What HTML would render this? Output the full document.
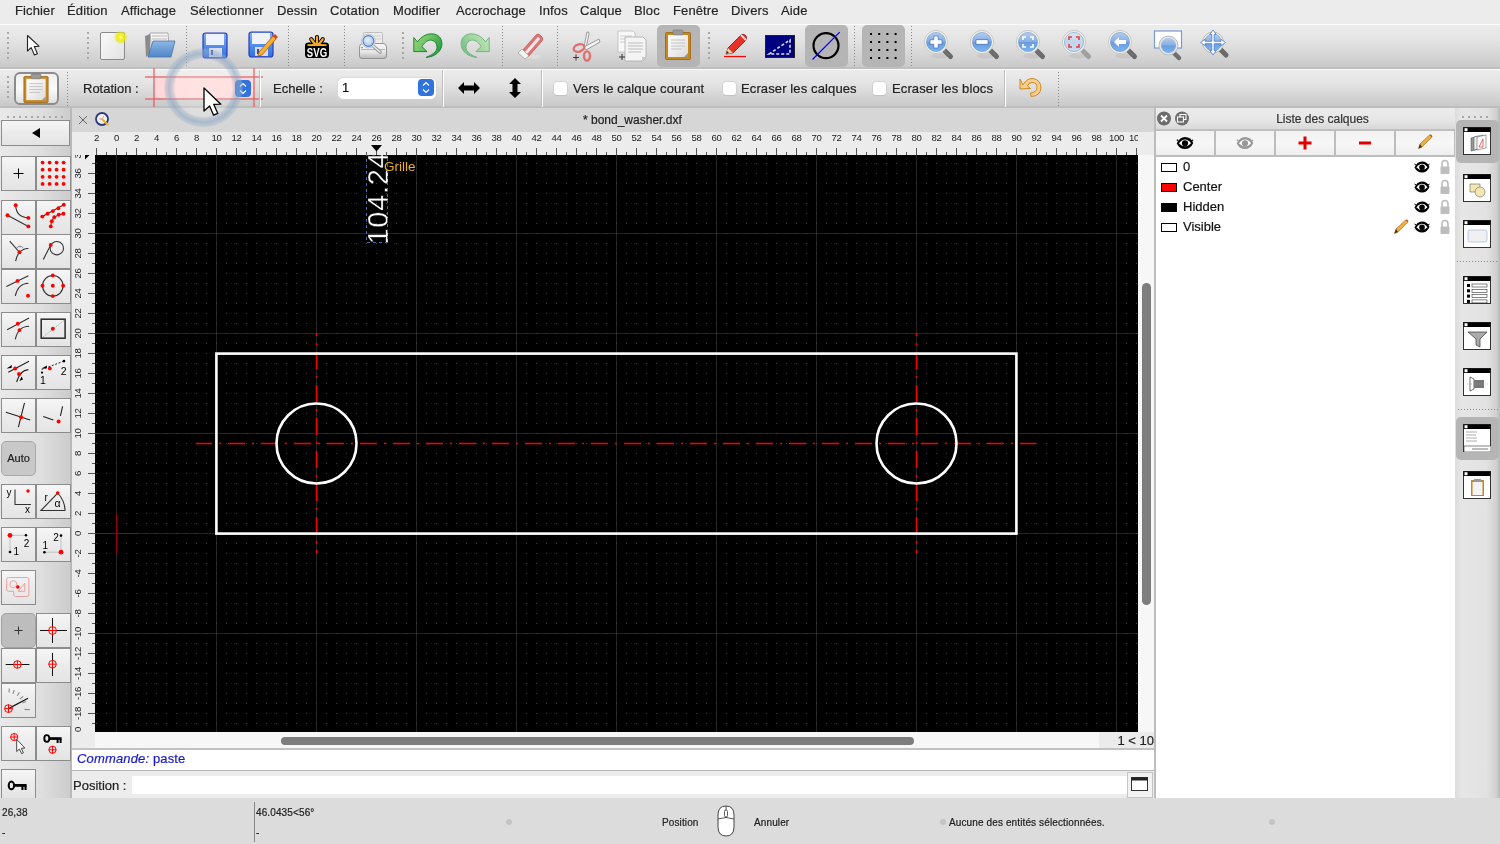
<!DOCTYPE html>
<html><head><meta charset="utf-8"><style>*{margin:0;padding:0;box-sizing:border-box}
html,body{width:1500px;height:844px;overflow:hidden;background:#ececec;font-family:"Liberation Sans",sans-serif;color:#222;position:relative}
body{will-change:transform;-webkit-font-smoothing:antialiased;-webkit-text-stroke:0.2px currentColor}
.a{position:absolute}
svg.a{display:block}
#menu{left:0;top:0;width:1500px;height:24px;background:#ececec}
#menu span{position:absolute;top:3px;font-size:13px;color:#262626;white-space:nowrap;letter-spacing:0.12px}
#tb1{left:0;top:24px;width:1500px;height:45px;background:linear-gradient(#ececec,#e4e4e4 35%,#d6d6d6 70%,#cacaca);border-top:1px solid #fbfbfb;border-bottom:2px solid #bfbfbf}
#tb2{left:0;top:69px;width:1500px;height:39px;background:linear-gradient(#ececec,#e4e4e4 35%,#d6d6d6 70%,#c9c9c9);border-top:1px solid #fbfbfb;border-bottom:2px solid #bdbdbd}
.dsep{position:absolute;width:1px;background:repeating-linear-gradient(#8a8a8a 0 1px,transparent 1px 3px)}
.hsep{position:absolute;width:2px;background:repeating-linear-gradient(#a8a8a8 0 2px,transparent 2px 5px)}
.wsep{position:absolute;width:2px;border-left:1px solid #c0c0c0;background:#fff}
#left{left:0;top:108px;width:70px;height:690px;background:linear-gradient(90deg,#e9e9e9,#dedede 60%,#cccccc)}
#leftb{left:70px;top:108px;width:2px;height:690px;background:#b8b8b8}
.btn{position:absolute;width:35px;height:35px;border:1px solid #8c8c8c;background:linear-gradient(#f6f6f6,#ececec 45%,#e4e4e4)}
.btn svg{position:absolute;left:0;top:0}
.btnp{position:absolute;width:35px;height:35px;border:1px solid #a0a0a0;border-radius:5px;background:#bdbdbd}
#mdi{left:72px;top:108px;width:1083px;height:690px;background:#d6d6d6}
#title{left:72px;top:108px;width:1083px;height:24px;background:#d6d6d6;font-size:12px;color:#222;line-height:24px;padding-left:511px}
#zoomlbl{left:1099px;top:732px;width:55px;height:16px;background:#ebebeb;font-size:13px;text-align:right;color:#222;line-height:17px}
#status{left:0;top:798px;width:1500px;height:46px;background:#dcdcdc;font-size:10px;color:#222}
.st{position:absolute;font-size:10px;color:#222;white-space:nowrap;letter-spacing:0.12px}
</style></head><body><div id="menu" class="a">
<span style="left:15px">Fichier</span>
<span style="left:67px">Édition</span>
<span style="left:121px">Affichage</span>
<span style="left:190px">Sélectionner</span>
<span style="left:277px">Dessin</span>
<span style="left:330px">Cotation</span>
<span style="left:393px">Modifier</span>
<span style="left:456px">Accrochage</span>
<span style="left:539px">Infos</span>
<span style="left:580px">Calque</span>
<span style="left:634px">Bloc</span>
<span style="left:673px">Fenêtre</span>
<span style="left:731px">Divers</span>
<span style="left:781px">Aide</span>
</div>
<div id="tb1" class="a"></div><div id="tb2" class="a"></div>
<svg width="0" height="0" style="position:absolute"><defs>
<linearGradient id="lensg" x1="0" y1="0" x2="0" y2="1"><stop offset="0" stop-color="#b4ccee"/><stop offset="0.48" stop-color="#86aee4"/><stop offset="0.52" stop-color="#6a9cdc"/><stop offset="1" stop-color="#7cb4ee"/></linearGradient>
<linearGradient id="lensgr" x1="0" y1="0" x2="0" y2="1"><stop offset="0" stop-color="#dce6f2"/><stop offset="0.5" stop-color="#c4d4ea"/><stop offset="1" stop-color="#c8dcf2"/></linearGradient>
<linearGradient id="flop" x1="0" y1="0" x2="0" y2="1"><stop offset="0" stop-color="#7fb1f2"/><stop offset="1" stop-color="#2f6fe0"/></linearGradient>
<linearGradient id="folder" x1="0" y1="0" x2="0" y2="1"><stop offset="0" stop-color="#8fb7e6"/><stop offset="1" stop-color="#4f86c8"/></linearGradient>
<linearGradient id="green" x1="0" y1="0" x2="1" y2="0.6"><stop offset="0" stop-color="#9ad878"/><stop offset="0.5" stop-color="#6cc464"/><stop offset="1" stop-color="#28a040"/></linearGradient>
<linearGradient id="greenl" x1="0" y1="0" x2="1" y2="0.6"><stop offset="0" stop-color="#c4e8b8"/><stop offset="0.5" stop-color="#a4d8a0"/><stop offset="1" stop-color="#78c088"/></linearGradient>
</defs></svg><div class="hsep" style="left:7px;top:32px;height:27px"></div><div class="hsep" style="left:87px;top:32px;height:27px"></div><div class="hsep" style="left:402px;top:32px;height:27px"></div><div class="hsep" style="left:708px;top:32px;height:27px"></div><div class="dsep" style="left:186px;top:26px;height:40px"></div><div class="dsep" style="left:288px;top:26px;height:40px"></div><div class="dsep" style="left:344px;top:26px;height:40px"></div><div class="dsep" style="left:502px;top:26px;height:40px"></div><div class="dsep" style="left:557px;top:26px;height:40px"></div><div class="dsep" style="left:854px;top:26px;height:40px"></div><div class="dsep" style="left:911px;top:26px;height:40px"></div><svg class="a" style="left:25px;top:34px" width="16" height="24" viewBox="0 0 16 24"><path d="M2.5,1.5 L2.5,17 L6.2,13.6 L9.4,21 L12.4,19.7 L9.3,12.6 L14,12.2 Z" fill="#fff" stroke="#222" stroke-width="1.1" stroke-linejoin="round"/></svg><svg class="a" style="left:98px;top:30px" width="30" height="32" viewBox="0 0 30 32"><defs><linearGradient id="pg" x1="0" y1="0" x2="1" y2="1"><stop offset="0" stop-color="#fafafa"/><stop offset="1" stop-color="#e2e2e2"/></linearGradient><radialGradient id="glow"><stop offset="0" stop-color="#ffffe8"/><stop offset="0.3" stop-color="#f6f020"/><stop offset="0.65" stop-color="#f0ea00" stop-opacity="0.75"/><stop offset="1" stop-color="#f0ea00" stop-opacity="0"/></radialGradient></defs><rect x="2.5" y="2.5" width="24" height="27" rx="1.5" fill="url(#pg)" stroke="#8a8a8a" stroke-width="1"/><circle cx="22.7" cy="7.3" r="7" fill="url(#glow)"/></svg><svg class="a" style="left:142px;top:30px" width="34" height="30" viewBox="0 0 34 30"><path d="M3,6 L8,4 L8,24 L4,27 Z" fill="#8a8a8a"/><path d="M8,3 L26,3 L27,18 L10,24 Z" fill="#f4f4f4" stroke="#999" stroke-width="0.8"/><path d="M10,6 L25,6 M10,9 L25,9" stroke="#bbb"/><path d="M6,27 L11,11 L33,11 L29,27 Z" fill="url(#folder)" stroke="#4a74a8" stroke-width="0.8"/></svg><svg class="a" style="left:202px;top:32px" width="31" height="28" viewBox="0 0 31 28"><rect x="1" y="1" width="24" height="25" rx="2.5" fill="url(#flop)" stroke="#2a3ab8" stroke-width="1.2"/><rect x="4" y="2" width="18" height="11" fill="#eef2fb"/><rect x="7" y="16" width="13" height="9" fill="#d8dce8"/><rect x="9" y="18" width="2" height="5" fill="#2a4ab8"/></svg><svg class="a" style="left:248px;top:31px" width="31" height="28" viewBox="0 0 31 28"><rect x="1" y="1" width="24" height="25" rx="2.5" fill="url(#flop)" stroke="#2a3ab8" stroke-width="1.2"/><rect x="4" y="2" width="18" height="11" fill="#eef2fb"/><rect x="7" y="16" width="13" height="9" fill="#d8dce8"/><rect x="9" y="18" width="2" height="5" fill="#2a4ab8"/><path d="M11,21 L25,5 L28,8 L14,24 L10,25 Z" fill="#f8b030" stroke="#b05a00" stroke-width="0.8"/><path d="M25,5 L27,3 L30,6 L28,8 Z" fill="#e04030"/></svg><svg class="a" style="left:304px;top:33px" width="26" height="26" viewBox="0 0 26 26"><g stroke="#000" stroke-width="4.2" stroke-linecap="round"><path d="M13,4 L13,12 M7.2,6.2 L11,12 M18.8,6.2 L15,12 M3.5,12 L22.5,12"/></g><rect x="1" y="9.6" width="24" height="15.4" rx="3.6" fill="#000"/><g stroke="#f6a829" stroke-width="2.2" stroke-linecap="round"><path d="M13,4 L13,11 M7.2,6.2 L11,11 M18.8,6.2 L15,11"/></g><path d="M3.6,12.6 Q13,9 22.4,12.6 L22.4,13 L3.6,13 Z" fill="#f6a829"/><rect x="3.5" y="11.2" width="19" height="1.6" fill="#f6a829"/><text x="13" y="23.6" font-family="Liberation Sans" font-weight="bold" font-size="12" fill="#fff" text-anchor="middle" transform="translate(13,0) scale(0.8,1) translate(-13,0)" style="-webkit-text-stroke:0.3px #fff">SVG</text></svg><svg class="a" style="left:357px;top:30px" width="32" height="31" viewBox="0 0 32 31"><defs><linearGradient id="prn" x1="0" y1="0" x2="0" y2="1"><stop offset="0" stop-color="#f8f8f8"/><stop offset="0.6" stop-color="#e4e4e4"/><stop offset="1" stop-color="#b8b8b8"/></linearGradient><radialGradient id="lensp" cx="0.45" cy="0.4" r="0.6"><stop offset="0" stop-color="#e6f0fa"/><stop offset="1" stop-color="#a8c6e8"/></radialGradient></defs><rect x="6.5" y="2.5" width="19" height="13" rx="1" fill="#ececec" stroke="#b4b4b4" stroke-width="0.8"/><path d="M15,6 L24,6 M15,9 L24,9" stroke="#d0d0d0"/><path d="M2.5,17 Q2.5,13.5 6,13.5 L26,13.5 Q29.5,13.5 29.5,17 L29.5,26 Q29.5,28.5 27,28.5 L5,28.5 Q2.5,28.5 2.5,26 Z" fill="url(#prn)" stroke="#8c8c8c" stroke-width="0.9"/><path d="M4,19.5 L28,19.5" stroke="#aaa" stroke-width="0.8"/><circle cx="5" cy="17.5" r="0.7" fill="#666"/><path d="M15,15 L23,22" stroke="#9a9a9a" stroke-width="3.6" stroke-linecap="round"/><path d="M15,15 L23,22" stroke="#e8e8e8" stroke-width="1.6" stroke-linecap="round"/><circle cx="11.4" cy="11" r="6.8" fill="#f4f4f4" stroke="#bdbdbd" stroke-width="0.8"/><circle cx="11.4" cy="11" r="5.4" fill="url(#lensp)" stroke="#4a80cc" stroke-width="1.1"/></svg><svg class="a" style="left:413px;top:33px" width="30" height="27" viewBox="0 0 30 27"><path d="M0.8,4.5 L4.5,8.9 Q10,1 18.4,0.8 C25,0.8 29,5 28.9,11.1 C28.9,18 22,24 13.1,24.4 C19,22 24,19 24,14.4 C24,10 21,7 17.6,7.1 C14,7.1 11,10 8.9,13.5 L14,18.6 L0.8,18.6 Z" fill="url(#green)" stroke="#167a2a" stroke-width="0.9" stroke-linejoin="round"/></svg><svg class="a" style="left:460px;top:33px" width="30" height="27" viewBox="0 0 30 27"><g transform="translate(30,0) scale(-1,1)"><path d="M0.8,4.5 L4.5,8.9 Q10,1 18.4,0.8 C25,0.8 29,5 28.9,11.1 C28.9,18 22,24 13.1,24.4 C19,22 24,19 24,14.4 C24,10 21,7 17.6,7.1 C14,7.1 11,10 8.9,13.5 L14,18.6 L0.8,18.6 Z" fill="url(#greenl)" stroke="#6cb07c" stroke-width="0.9" stroke-linejoin="round"/></g></svg><svg class="a" style="left:515px;top:31px" width="30" height="30" viewBox="0 0 30 30"><ellipse cx="16" cy="25.5" rx="10" ry="2" fill="#ddd"/><path d="M7,20 L21,4 Q23,2 25,4 L27,6 Q28.5,8 27,10 L13,26 Z" fill="#e07474" stroke="#c05050" stroke-width="0.7"/><path d="M11,22 L24,7" stroke="#f4e8e8" stroke-width="3"/><path d="M3,22 L7,18 L14,25 L10,28 Z" fill="#f4f4f4" stroke="#999" stroke-width="0.7"/></svg><svg class="a" style="left:570px;top:30px" width="32" height="32" viewBox="0 0 32 32"><path d="M14,17 L17,2 Q19,1 19,4 L16,18 Z" fill="#f4f4f4" stroke="#888" stroke-width="0.8"/><path d="M14,17 L29,9 L30,12 L16,20 Z" fill="#f4f4f4" stroke="#888" stroke-width="0.8"/><ellipse cx="9" cy="18" rx="5.5" ry="3.5" fill="none" stroke="#e07070" stroke-width="2.4" transform="rotate(-20 9 18)"/><ellipse cx="17" cy="26" rx="3" ry="4.6" fill="none" stroke="#e07070" stroke-width="2.4"/><path d="M3,27.5 L9,27.5 M6,24.5 L6,30.5" stroke="#333" stroke-width="1"/></svg><svg class="a" style="left:616px;top:30px" width="32" height="32" viewBox="0 0 32 32"><path d="M2,1 L17,1 L19,3 L19,22 L2,22 Z" fill="#f8f8f8" stroke="#bbb" stroke-width="0.8"/><path d="M4,6 L16,6 M4,9 L16,9 M4,12 L16,12" stroke="#ccc"/><path d="M9,7 L27,7 L30,10 L30,27 L27,31 L9,31 Z" fill="#f4f4f4" stroke="#aaa" stroke-width="0.8"/><path d="M12,13 L27,13 M12,16 L27,16 M12,19 L27,19 M12,22 L25,22" stroke="#bdbdbd"/><path d="M26,31 L30,27 L26,27 Z" fill="#ccc"/><path d="M3,27 L9,27 M6,24 L6,30" stroke="#333" stroke-width="1"/></svg><div class="a" style="left:657px;top:25px;width:43px;height:42px;background:#b5b5b5;border-radius:5px"></div><svg class="a" style="left:663px;top:29px" width="30" height="32" viewBox="0 0 30 32"><defs><linearGradient id="cbp" x1="0" y1="0" x2="1" y2="1"><stop offset="0" stop-color="#ffffff"/><stop offset="1" stop-color="#dcdcdc"/></linearGradient></defs><rect x="2.5" y="3.5" width="25" height="27" rx="1" fill="#c8861e" stroke="#9a6210" stroke-width="0.8"/><rect x="5" y="6" width="20" height="22" fill="url(#cbp)"/><path d="M8,11 L22,11 M8,14 L22,14 M8,17 L22,17 M8,20 L19,20" stroke="#c4c4c4" stroke-width="1"/><path d="M21,28 L25,24 L25,28 Z" fill="#999"/><rect x="10" y="1" width="10" height="5" rx="1" fill="#9a9a9a" stroke="#777" stroke-width="0.6"/></svg><svg class="a" style="left:722px;top:33px" width="26" height="26" viewBox="0 0 26 26"><path d="M2,23.5 L24,23.5" stroke="#ff0000" stroke-width="1.2"/><path d="M4,21 L6,15 L19,2 Q21,0.5 23,2 L24,3 Q25.5,5 24,7 L11,20 Z" fill="#e8302a" stroke="#7a1a10" stroke-width="0.8"/><path d="M4,21 L6,15 L11,20 Z" fill="#f0d0a0"/><path d="M4,21 L5,18 L7,20 Z" fill="#333"/><path d="M19,2 L24,7" stroke="#ddd" stroke-width="2"/></svg><svg class="a" style="left:765px;top:35px" width="30" height="24" viewBox="0 0 30 24"><rect x="0.5" y="0.5" width="29" height="22" fill="#000080" stroke="#222" stroke-width="1"/><path d="M4,19 L25,5 L25,19 Z" fill="none" stroke="#ddd" stroke-width="1.6" stroke-dasharray="3 2"/></svg><div class="a" style="left:805px;top:25px;width:43px;height:42px;background:#b5b5b5;border-radius:5px"></div><svg class="a" style="left:810px;top:30px" width="32" height="32" viewBox="0 0 32 32"><circle cx="16" cy="15.6" r="12.5" fill="none" stroke="#000" stroke-width="2.2"/><path d="M2.5,29.5 L29.7,2.1" stroke="#0000ff" stroke-width="1.2"/></svg><div class="a" style="left:862px;top:25px;width:43px;height:42px;background:#b5b5b5;border-radius:5px"></div><svg class="a" style="left:0;top:0" width="910" height="68" viewBox="0 0 910 68"><rect x="870.0" y="33" width="2" height="2" fill="#000"/><rect x="870.0" y="41" width="2" height="2" fill="#000"/><rect x="870.0" y="49" width="2" height="2" fill="#000"/><rect x="870.0" y="57" width="2" height="2" fill="#000"/><rect x="878.2" y="33" width="2" height="2" fill="#000"/><rect x="878.2" y="41" width="2" height="2" fill="#000"/><rect x="878.2" y="49" width="2" height="2" fill="#000"/><rect x="878.2" y="57" width="2" height="2" fill="#000"/><rect x="886.4" y="33" width="2" height="2" fill="#000"/><rect x="886.4" y="41" width="2" height="2" fill="#000"/><rect x="886.4" y="49" width="2" height="2" fill="#000"/><rect x="886.4" y="57" width="2" height="2" fill="#000"/><rect x="894.6" y="33" width="2" height="2" fill="#000"/><rect x="894.6" y="41" width="2" height="2" fill="#000"/><rect x="894.6" y="49" width="2" height="2" fill="#000"/><rect x="894.6" y="57" width="2" height="2" fill="#000"/></svg><svg class="a" style="left:923px;top:29px" width="32" height="32" viewBox="0 0 32 32"><ellipse cx="17" cy="27" rx="9" ry="2.5" fill="#000" opacity="0.06"/><path d="M20,20 L27.5,27.5" stroke="#6a6a6a" stroke-width="5" stroke-linecap="round"/><path d="M21,21 L27,27" stroke="#9a9a9a" stroke-width="1" stroke-dasharray="1 1" opacity="0.6"/><circle cx="13" cy="13" r="11.6" fill="#f2f2ee" stroke="#c4c4bc" stroke-width="0.9"/><circle cx="13" cy="13" r="9.6" fill="url(#lensg)" stroke="#5a88c8" stroke-width="0.5"/><path d="M10.8,7 L15.2,7 L15.2,10.8 L19,10.8 L19,15.2 L15.2,15.2 L15.2,19 L10.8,19 L10.8,15.2 L7,15.2 L7,10.8 L10.8,10.8 Z" fill="#fff" stroke="#2a5aa8" stroke-width="0.6"/></svg><svg class="a" style="left:969px;top:29px" width="32" height="32" viewBox="0 0 32 32"><ellipse cx="17" cy="27" rx="9" ry="2.5" fill="#000" opacity="0.06"/><path d="M20,20 L27.5,27.5" stroke="#6a6a6a" stroke-width="5" stroke-linecap="round"/><path d="M21,21 L27,27" stroke="#9a9a9a" stroke-width="1" stroke-dasharray="1 1" opacity="0.6"/><circle cx="13" cy="13" r="11.6" fill="#f2f2ee" stroke="#c4c4bc" stroke-width="0.9"/><circle cx="13" cy="13" r="9.6" fill="url(#lensg)" stroke="#5a88c8" stroke-width="0.5"/><rect x="7" y="10.8" width="12" height="4.4" fill="#fff" stroke="#2a5aa8" stroke-width="0.6"/></svg><svg class="a" style="left:1015px;top:29px" width="32" height="32" viewBox="0 0 32 32"><ellipse cx="17" cy="27" rx="9" ry="2.5" fill="#000" opacity="0.06"/><path d="M20,20 L27.5,27.5" stroke="#6a6a6a" stroke-width="5" stroke-linecap="round"/><path d="M21,21 L27,27" stroke="#9a9a9a" stroke-width="1" stroke-dasharray="1 1" opacity="0.6"/><circle cx="13" cy="13" r="11.6" fill="#f2f2ee" stroke="#c4c4bc" stroke-width="0.9"/><circle cx="13" cy="13" r="9.6" fill="url(#lensg)" stroke="#5a88c8" stroke-width="0.5"/><path d="M8,11 L8,8 L11,8 M15,8 L18,8 L18,11 M18,15 L18,18 L15,18 M11,18 L8,18 L8,15" stroke="#fff" stroke-width="1.6" fill="none"/></svg><svg class="a" style="left:1061px;top:29px" width="32" height="32" viewBox="0 0 32 32"><ellipse cx="17" cy="27" rx="9" ry="2.5" fill="#000" opacity="0.06"/><path d="M20,20 L27.5,27.5" stroke="#a0a0a0" stroke-width="5" stroke-linecap="round"/><path d="M21,21 L27,27" stroke="#9a9a9a" stroke-width="1" stroke-dasharray="1 1" opacity="0.6"/><circle cx="13" cy="13" r="11.6" fill="#f2f2ee" stroke="#c4c4bc" stroke-width="0.9"/><circle cx="13" cy="13" r="9.6" fill="url(#lensgr)" stroke="#5a88c8" stroke-width="0.5"/><path d="M8,11 L8,8 L11,8 M15,8 L18,8 L18,11 M18,15 L18,18 L15,18 M11,18 L8,18 L8,15" stroke="#e04040" stroke-width="1.6" fill="none"/></svg><svg class="a" style="left:1107px;top:29px" width="32" height="32" viewBox="0 0 32 32"><ellipse cx="17" cy="27" rx="9" ry="2.5" fill="#000" opacity="0.06"/><path d="M20,20 L27.5,27.5" stroke="#6a6a6a" stroke-width="5" stroke-linecap="round"/><path d="M21,21 L27,27" stroke="#9a9a9a" stroke-width="1" stroke-dasharray="1 1" opacity="0.6"/><circle cx="13" cy="13" r="11.6" fill="#f2f2ee" stroke="#c4c4bc" stroke-width="0.9"/><circle cx="13" cy="13" r="9.6" fill="url(#lensg)" stroke="#5a88c8" stroke-width="0.5"/><path d="M7,13 L12,8 L12,11 L19,11 L19,15 L12,15 L12,18 Z" fill="#fff"/></svg><svg class="a" style="left:1152px;top:29px" width="34" height="34" viewBox="0 0 34 34"><rect x="2.5" y="2" width="27" height="17" fill="#fff" stroke="#7a9ad0" stroke-width="1.2"/><path d="M20,22 L27,29" stroke="#6e6e6e" stroke-width="4.5" stroke-linecap="round"/><circle cx="16.5" cy="16.5" r="9.5" fill="#e4e4e4" stroke="#bbb"/><circle cx="16.5" cy="16.5" r="7.5" fill="url(#lensg)"/></svg><svg class="a" style="left:1197px;top:27px" width="34" height="34" viewBox="0 0 34 34"><path d="M22,21 L29,28" stroke="#6a6a6a" stroke-width="5" stroke-linecap="round"/><circle cx="16" cy="15.5" r="10.5" fill="#f2f2ee" stroke="#b4b4ac" stroke-width="0.9"/><circle cx="16" cy="15.5" r="8.6" fill="url(#lensg)" stroke="#5a88c8" stroke-width="0.5"/><path d="M16,3 L19.2,7.5 L17.2,7.5 L17.2,14.3 L24,14.3 L24,12.3 L28.5,15.5 L24,18.7 L24,16.7 L17.2,16.7 L17.2,23.5 L19.2,23.5 L16,28 L12.8,23.5 L14.8,23.5 L14.8,16.7 L8,16.7 L8,18.7 L3.5,15.5 L8,12.3 L8,14.3 L14.8,14.3 L14.8,7.5 L12.8,7.5 Z" fill="#fff" stroke="#4a7cd0" stroke-width="0.8" stroke-linejoin="round"/></svg>
<div class="hsep" style="left:7px;top:76px;height:24px"></div><div class="a" style="left:14px;top:72px;width:45px;height:33px;border:2px solid #8c8c8c;border-radius:6px;background:linear-gradient(#f0f0f0,#fafafa 50%,#e0e0e0)"></div><svg class="a" style="left:21px;top:73px" width="30" height="31" viewBox="0 0 30 32"><defs><linearGradient id="cbp" x1="0" y1="0" x2="1" y2="1"><stop offset="0" stop-color="#ffffff"/><stop offset="1" stop-color="#dcdcdc"/></linearGradient></defs><rect x="2.5" y="3.5" width="25" height="27" rx="1" fill="#c8861e" stroke="#9a6210" stroke-width="0.8"/><rect x="5" y="6" width="20" height="22" fill="url(#cbp)"/><path d="M8,11 L22,11 M8,14 L22,14 M8,17 L22,17 M8,20 L19,20" stroke="#c4c4c4" stroke-width="1"/><path d="M21,28 L25,24 L25,28 Z" fill="#999"/><rect x="10" y="1" width="10" height="5" rx="1" fill="#9a9a9a" stroke="#777" stroke-width="0.6"/></svg><div class="dsep" style="left:67px;top:72px;height:34px"></div><div class="a" style="left:83px;top:81px;font-size:13px;color:#222">Rotation :</div><div class="a" style="left:155px;top:78px;width:98px;height:20px;background:#ffd9d9;border-radius:5px"></div><div class="a" style="left:145px;top:76px;width:118px;height:1.6px;background:rgba(236,90,90,0.62)"></div><div class="a" style="left:145px;top:98.2px;width:118px;height:1.6px;background:rgba(236,90,90,0.62)"></div><div class="a" style="left:153.2px;top:68px;width:1.6px;height:39px;background:rgba(236,90,90,0.62)"></div><div class="a" style="left:253.2px;top:68px;width:1.6px;height:39px;background:rgba(236,90,90,0.62)"></div><svg class="a" style="left:235px;top:80px" width="16" height="17" viewBox="0 0 16 17"><rect x="0" y="0" width="16" height="17" rx="4" fill="#2f72e0"/><path d="M5,6.5 L8,3.5 L11,6.5 M5,10.5 L8,13.5 L11,10.5" stroke="#fff" stroke-width="1.2" fill="none"/></svg><div class="wsep" style="left:259px;top:70px;height:37px"></div><div class="a" style="left:273px;top:81px;font-size:13px;color:#222">Echelle :</div><div class="a" style="left:338px;top:78px;width:98px;height:21px;background:#fff;border-radius:5px;box-shadow:0 0 0 0.5px #d0d0d0"></div><div class="a" style="left:342px;top:80px;font-size:13px;color:#111">1</div><svg class="a" style="left:418px;top:79px" width="16" height="17" viewBox="0 0 16 17"><rect x="0" y="0" width="16" height="17" rx="4" fill="#2f72e0"/><path d="M5,6.5 L8,3.5 L11,6.5 M5,10.5 L8,13.5 L11,10.5" stroke="#fff" stroke-width="1.2" fill="none"/></svg><div class="wsep" style="left:442px;top:70px;height:37px"></div><svg class="a" style="left:457px;top:80px" width="24" height="16" viewBox="0 0 24 16"><path d="M1,8 L7,2 L7,5.5 L17,5.5 L17,2 L23,8 L17,14 L17,10.5 L7,10.5 L7,14 Z" fill="#000"/></svg><svg class="a" style="left:506px;top:77px" width="18" height="22" viewBox="0 0 18 22"><path d="M9,1 L15,7 L11.5,7 L11.5,15 L15,15 L9,21 L3,15 L6.5,15 L6.5,7 L3,7 Z" fill="#000"/></svg><div class="wsep" style="left:541px;top:70px;height:37px"></div><div class="a" style="left:554px;top:82px;width:13px;height:13px;background:#fff;border-radius:3px;box-shadow:0 0 0 0.5px #c8c8c8, 0 0.5px 1px #bbb"></div><div class="a" style="left:573px;top:81px;font-size:13px;color:#222;white-space:nowrap;letter-spacing:0.12px">Vers le calque courant</div><div class="a" style="left:723px;top:82px;width:13px;height:13px;background:#fff;border-radius:3px;box-shadow:0 0 0 0.5px #c8c8c8, 0 0.5px 1px #bbb"></div><div class="a" style="left:741px;top:81px;font-size:13px;color:#222;white-space:nowrap;letter-spacing:0.12px">Ecraser les calques</div><div class="a" style="left:873px;top:82px;width:13px;height:13px;background:#fff;border-radius:3px;box-shadow:0 0 0 0.5px #c8c8c8, 0 0.5px 1px #bbb"></div><div class="a" style="left:892px;top:81px;font-size:13px;color:#222;white-space:nowrap;letter-spacing:0.12px">Ecraser les blocs</div><div class="wsep" style="left:1004px;top:70px;height:37px"></div><svg class="a" style="left:1018px;top:76px" width="26" height="22" viewBox="0 0 26 22"><path d="M5,9 Q9,2 15,2.5 Q23,4 23,12 Q22.5,20 13,20.5 L12.5,17 Q19,16.5 19,11.5 Q19,6.5 14,6.5 Q10.5,6.5 9.5,10 L12.5,12.5 L2,13 L2,3 Z" fill="#f8cf90" stroke="#d08820" stroke-width="1"/></svg><div class="dsep" style="left:1058px;top:72px;height:34px"></div>
<div id="left" class="a"></div><div id="leftb" class="a"></div>
<div class="a" style="left:7px;top:116px;width:56px;height:2px;background:repeating-linear-gradient(90deg,#a8a8a8 0 2px,transparent 2px 6px)"></div><div class="btn" style="left:1px;top:120px;width:69px;height:26px"></div><svg class="a" style="left:31px;top:127px" width="10" height="12" viewBox="0 0 10 12"><path d="M1,6 L9,1 L9,11 Z" fill="#000"/></svg><div class="btn" style="left:1px;top:156px;width:35px;height:35px"><svg width="33" height="33" viewBox="0 0 33 33"><path d="M11.5,16.5 L21.5,16.5 M16.5,11.5 L16.5,21.5" stroke="#000" stroke-width="1"/></svg></div><div class="btn" style="left:36px;top:156px;width:35px;height:35px"><svg width="33" height="33" viewBox="0 0 33 33"><circle cx="5.6" cy="5.6" r="1.9" fill="#ff0000"/><circle cx="5.6" cy="12.7" r="1.9" fill="#ff0000"/><circle cx="5.6" cy="19.799999999999997" r="1.9" fill="#ff0000"/><circle cx="5.6" cy="26.9" r="1.9" fill="#ff0000"/><circle cx="12.6" cy="5.6" r="1.9" fill="#ff0000"/><circle cx="12.6" cy="12.7" r="1.9" fill="#ff0000"/><circle cx="12.6" cy="19.799999999999997" r="1.9" fill="#ff0000"/><circle cx="12.6" cy="26.9" r="1.9" fill="#ff0000"/><circle cx="19.6" cy="5.6" r="1.9" fill="#ff0000"/><circle cx="19.6" cy="12.7" r="1.9" fill="#ff0000"/><circle cx="19.6" cy="19.799999999999997" r="1.9" fill="#ff0000"/><circle cx="19.6" cy="26.9" r="1.9" fill="#ff0000"/><circle cx="26.6" cy="5.6" r="1.9" fill="#ff0000"/><circle cx="26.6" cy="12.7" r="1.9" fill="#ff0000"/><circle cx="26.6" cy="19.799999999999997" r="1.9" fill="#ff0000"/><circle cx="26.6" cy="26.9" r="1.9" fill="#ff0000"/></svg></div><div class="btn" style="left:1px;top:200px;width:35px;height:35px"><svg width="33" height="33" viewBox="0 0 33 33"><path d="M5.5,14.2 L26.4,25.4" stroke="#333" stroke-width="1.1"/><path d="M13.7,4.2 Q14,16 26.4,16.9" stroke="#333" stroke-width="1.1" fill="none"/><circle cx="5.5" cy="14.2" r="1.95" fill="#ff0000"/><circle cx="26.4" cy="25.4" r="1.95" fill="#ff0000"/><circle cx="13.7" cy="4.2" r="1.95" fill="#ff0000"/><circle cx="26.4" cy="16.9" r="1.95" fill="#ff0000"/></svg></div><div class="btn" style="left:36px;top:200px;width:35px;height:35px"><svg width="33" height="33" viewBox="0 0 33 33"><path d="M5.3,15.6 L26.8,3.8 M13.8,25.4 Q14,17 21.7,13.8 L26.4,12.7" stroke="#333" stroke-width="1.1" fill="none"/><circle cx="5.3" cy="15.6" r="1.95" fill="#ff0000"/><circle cx="10.5" cy="12.8" r="1.95" fill="#ff0000"/><circle cx="15.9" cy="10.1" r="1.95" fill="#ff0000"/><circle cx="21.4" cy="7.2" r="1.95" fill="#ff0000"/><circle cx="26.8" cy="3.8" r="1.95" fill="#ff0000"/><circle cx="13.8" cy="25.4" r="1.95" fill="#ff0000"/><circle cx="14.8" cy="20.3" r="1.95" fill="#ff0000"/><circle cx="17.3" cy="16.2" r="1.95" fill="#ff0000"/><circle cx="21.7" cy="13.8" r="1.95" fill="#ff0000"/><circle cx="26.4" cy="12.7" r="1.95" fill="#ff0000"/></svg></div><div class="btn" style="left:1px;top:234px;width:35px;height:35px"><svg width="33" height="33" viewBox="0 0 33 33"><path d="M7.7,6.1 L17.5,17.3 Q22,13 26.4,13.5 M17.5,17.3 Q14.5,21 13.6,26.2" stroke="#333" stroke-width="1.1" fill="none"/><path d="M14.3,13.5 Q17.5,9 21.4,13" stroke="#555" stroke-width="0.7" fill="none"/><circle cx="18" cy="12" r="0.4" fill="#333"/><circle cx="17.5" cy="17.3" r="1.95" fill="#ff0000"/></svg></div><div class="btn" style="left:36px;top:234px;width:35px;height:35px"><svg width="33" height="33" viewBox="0 0 33 33"><circle cx="19.8" cy="13.2" r="6.7" fill="none" stroke="#333" stroke-width="1.1"/><path d="M6.3,24.5 L13.7,9.9" stroke="#333" stroke-width="1.1"/><circle cx="13.7" cy="9.9" r="1.95" fill="#ff0000"/></svg></div><div class="btn" style="left:1px;top:269px;width:35px;height:35px"><svg width="33" height="33" viewBox="0 0 33 33"><path d="M4.4,16.5 L26.4,5.7 M26.4,13.3 Q16,13.5 13.3,26" stroke="#333" stroke-width="1.1" fill="none"/><circle cx="15.5" cy="10.9" r="1.95" fill="#ff0000"/><circle cx="26" cy="25.8" r="1.95" fill="#ff0000"/></svg></div><div class="btn" style="left:36px;top:269px;width:35px;height:35px"><svg width="33" height="33" viewBox="0 0 33 33"><circle cx="15.8" cy="15.8" r="10.3" fill="none" stroke="#333" stroke-width="1.1"/><circle cx="15.8" cy="5.5" r="1.95" fill="#ff0000"/><circle cx="15.8" cy="26.1" r="1.95" fill="#ff0000"/><circle cx="5.5" cy="15.8" r="1.95" fill="#ff0000"/><circle cx="26.1" cy="15.8" r="1.95" fill="#ff0000"/><circle cx="15.8" cy="15.8" r="1.95" fill="#ff0000"/></svg></div><div class="btn" style="left:1px;top:312px;width:35px;height:35px"><svg width="33" height="33" viewBox="0 0 33 33"><path d="M5.1,16.7 L27.1,5.1 M27.1,13.3 Q16,13.5 13.3,26.4" stroke="#333" stroke-width="1.1" fill="none"/><circle cx="15.8" cy="10.8" r="1.95" fill="#ff0000"/><circle cx="17.5" cy="17.1" r="1.95" fill="#ff0000"/></svg></div><div class="btn" style="left:36px;top:312px;width:35px;height:35px"><svg width="33" height="33" viewBox="0 0 33 33"><rect x="4.2" y="6.2" width="23.9" height="19" fill="none" stroke="#333" stroke-width="1.6"/><path d="M6,24 L27,7.5" stroke="#888" stroke-width="0.7" stroke-dasharray="1.6 1.2"/><circle cx="15.8" cy="15.7" r="1.95" fill="#ff0000"/></svg></div><div class="btn" style="left:1px;top:355px;width:35px;height:35px"><svg width="33" height="33" viewBox="0 0 33 33"><path d="M6.3,16.2 L27,5.3 M26.4,13.6 Q18,14 14.6,26" stroke="#222" stroke-width="1.1" fill="none"/><path d="M4.5,12.5 L10,9 L9.5,12 Z M17.5,25 L19.5,20.5 L21,23.5 Z" fill="#000"/><circle cx="13.2" cy="12.4" r="2" fill="#ff0000"/><circle cx="17" cy="18.1" r="2" fill="#ff0000"/></svg></div><div class="btn" style="left:36px;top:355px;width:35px;height:35px"><svg width="33" height="33" viewBox="0 0 33 33"><path d="M4.7,13.4 L27,5.1" stroke="#222" stroke-width="1" stroke-dasharray="2 1.6"/><path d="M4.5,12.5 L10,9.5 L9.5,12.5 Z" fill="#000"/><circle cx="12.8" cy="12.4" r="1.9" fill="#ff0000"/><circle cx="27" cy="5.1" r="1.3" fill="#000"/><circle cx="5" cy="16.6" r="1.1" fill="#000"/><text x="26.7" y="19" font-size="10.5" font-family="Liberation Sans" text-anchor="middle">2</text><text x="6" y="28.4" font-size="10.5" font-family="Liberation Sans" text-anchor="middle">1</text></svg></div><div class="btn" style="left:1px;top:398px;width:35px;height:35px"><svg width="33" height="33" viewBox="0 0 33 33"><path d="M3.9,13.3 L28.2,21 M22.5,3.8 L16.4,28.1" stroke="#222" stroke-width="1.1"/><circle cx="19.1" cy="18.3" r="2" fill="#ff0000"/></svg></div><div class="btn" style="left:36px;top:398px;width:35px;height:35px"><svg width="33" height="33" viewBox="0 0 33 33"><path d="M6.2,17.4 L16.3,21 M25.6,7.4 L23.4,16.8" stroke="#222" stroke-width="1.1"/><circle cx="21.6" cy="22.5" r="2" fill="#ff0000"/></svg></div><div class="btnp" style="left:1px;top:441px;width:35px;height:35px;font-size:11px;color:#222;text-align:center;line-height:33px;background:#c8c8c8;border-color:#a8a8a8">Auto</div><div class="btn" style="left:1px;top:484px;width:35px;height:35px"><svg width="33" height="33" viewBox="0 0 33 33"><path d="M13,4.5 L13,19.5 L29,19.5" stroke="#333" stroke-width="1.1" fill="none"/><text x="4.5" y="11" font-size="10" font-family="Liberation Sans">y</text><text x="23" y="28" font-size="10" font-family="Liberation Sans">x</text><circle cx="26" cy="6" r="1.7" fill="#ff0000"/></svg></div><div class="btn" style="left:36px;top:484px;width:35px;height:35px"><svg width="33" height="33" viewBox="0 0 33 33"><path d="M4,25.5 L20.7,8 Q28,16 28,25.5 Z" stroke="#333" stroke-width="1.1" fill="none"/><text x="7.5" y="15.5" font-size="10" font-family="Liberation Sans">r</text><text x="17.5" y="22" font-size="10.5" font-family="Liberation Sans">α</text><circle cx="20.7" cy="8" r="1.8" fill="#ff0000"/></svg></div><div class="btn" style="left:1px;top:527px;width:35px;height:35px"><svg width="33" height="33" viewBox="0 0 33 33"><path d="M8,7.3 L24,7.3 M8,7.3 L8,24" stroke="#c0c0c0" stroke-width="1"/><circle cx="8" cy="7.3" r="2.4" fill="#ff0000"/><circle cx="24" cy="7.3" r="1.3" fill="#000"/><circle cx="8" cy="24" r="1.3" fill="#000"/><text x="24.6" y="18.5" font-size="10" font-family="Liberation Sans" text-anchor="middle">2</text><text x="14.3" y="26.5" font-size="10" font-family="Liberation Sans" text-anchor="middle">1</text></svg></div><div class="btn" style="left:36px;top:527px;width:35px;height:35px"><svg width="33" height="33" viewBox="0 0 33 33"><path d="M24,7.6 L24,24.2 M7.4,24.2 L24,24.2" stroke="#c0c0c0" stroke-width="1"/><circle cx="24" cy="24.2" r="2.4" fill="#ff0000"/><circle cx="24" cy="7.6" r="1.3" fill="#000"/><circle cx="7.4" cy="24.2" r="1.3" fill="#000"/><text x="19.1" y="13" font-size="10" font-family="Liberation Sans" text-anchor="middle">2</text><text x="8.4" y="20.8" font-size="10" font-family="Liberation Sans" text-anchor="middle">1</text></svg></div><div class="btn" style="left:1px;top:570px;width:35px;height:35px"><svg width="33" height="33" viewBox="0 0 33 33"><g opacity="0.4" fill="none" stroke="#e83030" stroke-width="1"><path d="M6.6,6.5 L24.9,6.5 Q26.9,6.5 26.9,8.5 L26.9,23.5 Q26.9,25.5 24.9,25.5 L13.7,25.5 Q11.7,25.5 11.7,23.5 L11.7,20.3 L6.6,20.3 Q4.6,20.3 4.6,18.3 L4.6,8.5 Q4.6,6.5 6.6,6.5 Z"/><circle cx="11.3" cy="13.2" r="3.5"/><path d="M16,20.3 L22.8,12.2 L22.8,20.3 Z"/></g><circle cx="15.8" cy="16" r="1.8" fill="#ff0000"/></svg></div><div class="btnp" style="left:1px;top:613px"><svg width="33" height="33" viewBox="0 0 33 33"><path d="M12.5,16.5 L20.5,16.5 M16.5,12.5 L16.5,20.5" stroke="#333" stroke-width="1"/></svg></div><div class="btn" style="left:36px;top:613px;width:35px;height:35px"><svg width="33" height="33" viewBox="0 0 33 33"><path d="M3,16.5 L30,16.5 M15.5,4 L15.5,29" stroke="#111" stroke-width="1"/><circle cx="15.5" cy="16.5" r="3.9" fill="none" stroke="#ff0000" stroke-width="1"/><path d="M11.6,16.5 L19.4,16.5 M15.5,12.6 L15.5,20.4" stroke="#ff0000" stroke-width="1"/></svg></div><div class="btn" style="left:1px;top:648px;width:35px;height:35px"><svg width="33" height="33" viewBox="0 0 33 33"><path d="M3.7,15.5 L27.4,15.5" stroke="#111" stroke-width="1"/><circle cx="15.4" cy="15.5" r="3.8" fill="none" stroke="#ff0000" stroke-width="1"/><path d="M11.600000000000001,15.5 L19.2,15.5 M15.4,11.7 L15.4,19.3" stroke="#ff0000" stroke-width="1"/></svg></div><div class="btn" style="left:36px;top:648px;width:35px;height:35px"><svg width="33" height="33" viewBox="0 0 33 33"><path d="M15.5,3.9 L15.5,27" stroke="#111" stroke-width="1"/><circle cx="15.5" cy="15.2" r="3.8" fill="none" stroke="#ff0000" stroke-width="1"/><path d="M11.7,15.2 L19.3,15.2 M15.5,11.399999999999999 L15.5,19.0" stroke="#ff0000" stroke-width="1"/></svg></div><div class="btn" style="left:1px;top:683px;width:35px;height:35px"><svg width="33" height="33" viewBox="0 0 33 33"><path d="M7.1,8.6 L7.2,4.6 M11.0,9.8 L12.2,6.0 M15.2,11.7 L17.4,8.4 M18.0,15.0 L21.1,12.4 M20.4,19.0 L24.1,17.5 M22.5,25.4 L28.0,25.7" stroke="#8a8a8a" stroke-width="1.1"/><path d="M6.5,24.6 L26,14.3" stroke="#111" stroke-width="1.2"/><circle cx="6.5" cy="24.6" r="3.9" fill="none" stroke="#ff0000" stroke-width="1"/><path d="M2.6,24.6 L10.4,24.6 M6.5,20.700000000000003 L6.5,28.5" stroke="#ff0000" stroke-width="1"/></svg></div><div class="btn" style="left:1px;top:726px;width:35px;height:35px"><svg width="33" height="33" viewBox="0 0 33 33"><circle cx="12.2" cy="10" r="3.6" fill="none" stroke="#ff0000" stroke-width="1"/><path d="M8.6,10 L15.799999999999999,10 M12.2,6.4 L12.2,13.6" stroke="#ff0000" stroke-width="1"/><path d="M14.7,12.4 L14.7,24.5 L17.4,22 L19.6,26.6 L21.4,25.8 L19.3,21.3 L22.8,21.1 Z" fill="#fff" stroke="#333" stroke-width="0.9" stroke-linejoin="round"/></svg></div><div class="btn" style="left:36px;top:726px;width:35px;height:35px"><svg width="33" height="33" viewBox="0 0 33 33"><ellipse cx="9.8" cy="11.5" rx="2.5" ry="3.4" fill="none" stroke="#000" stroke-width="1.9"/><rect x="12.2" y="10.2" width="12.4" height="2.7" fill="#000"/><rect x="19.6" y="12" width="2" height="4" fill="#000"/><rect x="22.6" y="12" width="2" height="4" fill="#000"/><circle cx="15.5" cy="22.8" r="3.6" fill="none" stroke="#ff0000" stroke-width="1"/><path d="M11.9,22.8 L19.1,22.8 M15.5,19.2 L15.5,26.400000000000002" stroke="#ff0000" stroke-width="1"/></svg></div><div class="btn" style="left:1px;top:769px;width:35px;height:30px"><svg width="33" height="28" viewBox="0 0 33 28"><ellipse cx="9.4" cy="15.4" rx="2.7" ry="3.8" fill="none" stroke="#000" stroke-width="2"/><rect x="12" y="14" width="12.6" height="2.8" fill="#000"/><rect x="19.4" y="15.8" width="2.1" height="4.2" fill="#000"/><rect x="22.5" y="15.8" width="2.1" height="4.2" fill="#000"/></svg></div>
<div id="mdi" class="a"></div>
<div id="title" class="a">* bond_washer.dxf</div>
<svg class="a" style="left:78px;top:115px" width="10" height="10" viewBox="0 0 10 10"><path d="M1,1 L9,9 M9,1 L1,9" stroke="#666" stroke-width="1"/></svg><svg class="a" style="left:95px;top:112px" width="15" height="15" viewBox="0 0 15 15"><circle cx="7" cy="7" r="6" fill="#f4f4f4" stroke="#2a3a80" stroke-width="1.8"/><path d="M4,7 L7,7 L9,4" stroke="#c44" stroke-width="0.6" fill="none"/><path d="M7,7 L13,13" stroke="#e8b030" stroke-width="2"/></svg>
<svg class="a" style="left:72px;top:132px" width="1082" height="23" viewBox="0 0 1082 23"><defs><clipPath id="rclip"><rect width="1066" height="23"/></clipPath></defs><rect width="1082" height="23" fill="#ececec"/><g clip-path="url(#rclip)"><rect x="24" y="16" width="1" height="7" fill="#555"/><text x="24.5" y="9" font-size="9.6" letter-spacing="-0.35" text-anchor="middle" fill="#222" font-family="Liberation Sans">2</text><rect x="34" y="20" width="1" height="3" fill="#555"/><rect x="44" y="16" width="1" height="7" fill="#555"/><text x="44.5" y="9" font-size="9.6" letter-spacing="-0.35" text-anchor="middle" fill="#222" font-family="Liberation Sans">0</text><rect x="54" y="20" width="1" height="3" fill="#555"/><rect x="64" y="16" width="1" height="7" fill="#555"/><text x="64.5" y="9" font-size="9.6" letter-spacing="-0.35" text-anchor="middle" fill="#222" font-family="Liberation Sans">2</text><rect x="74" y="20" width="1" height="3" fill="#555"/><rect x="84" y="16" width="1" height="7" fill="#555"/><text x="84.5" y="9" font-size="9.6" letter-spacing="-0.35" text-anchor="middle" fill="#222" font-family="Liberation Sans">4</text><rect x="94" y="20" width="1" height="3" fill="#555"/><rect x="104" y="16" width="1" height="7" fill="#555"/><text x="104.5" y="9" font-size="9.6" letter-spacing="-0.35" text-anchor="middle" fill="#222" font-family="Liberation Sans">6</text><rect x="114" y="20" width="1" height="3" fill="#555"/><rect x="124" y="16" width="1" height="7" fill="#555"/><text x="124.5" y="9" font-size="9.6" letter-spacing="-0.35" text-anchor="middle" fill="#222" font-family="Liberation Sans">8</text><rect x="134" y="20" width="1" height="3" fill="#555"/><rect x="144" y="16" width="1" height="7" fill="#555"/><text x="144.5" y="9" font-size="9.6" letter-spacing="-0.35" text-anchor="middle" fill="#222" font-family="Liberation Sans">10</text><rect x="154" y="20" width="1" height="3" fill="#555"/><rect x="164" y="16" width="1" height="7" fill="#555"/><text x="164.5" y="9" font-size="9.6" letter-spacing="-0.35" text-anchor="middle" fill="#222" font-family="Liberation Sans">12</text><rect x="174" y="20" width="1" height="3" fill="#555"/><rect x="184" y="16" width="1" height="7" fill="#555"/><text x="184.5" y="9" font-size="9.6" letter-spacing="-0.35" text-anchor="middle" fill="#222" font-family="Liberation Sans">14</text><rect x="194" y="20" width="1" height="3" fill="#555"/><rect x="204" y="16" width="1" height="7" fill="#555"/><text x="204.5" y="9" font-size="9.6" letter-spacing="-0.35" text-anchor="middle" fill="#222" font-family="Liberation Sans">16</text><rect x="214" y="20" width="1" height="3" fill="#555"/><rect x="224" y="16" width="1" height="7" fill="#555"/><text x="224.5" y="9" font-size="9.6" letter-spacing="-0.35" text-anchor="middle" fill="#222" font-family="Liberation Sans">18</text><rect x="234" y="20" width="1" height="3" fill="#555"/><rect x="244" y="16" width="1" height="7" fill="#555"/><text x="244.5" y="9" font-size="9.6" letter-spacing="-0.35" text-anchor="middle" fill="#222" font-family="Liberation Sans">20</text><rect x="254" y="20" width="1" height="3" fill="#555"/><rect x="264" y="16" width="1" height="7" fill="#555"/><text x="264.5" y="9" font-size="9.6" letter-spacing="-0.35" text-anchor="middle" fill="#222" font-family="Liberation Sans">22</text><rect x="274" y="20" width="1" height="3" fill="#555"/><rect x="284" y="16" width="1" height="7" fill="#555"/><text x="284.5" y="9" font-size="9.6" letter-spacing="-0.35" text-anchor="middle" fill="#222" font-family="Liberation Sans">24</text><rect x="294" y="20" width="1" height="3" fill="#555"/><rect x="304" y="16" width="1" height="7" fill="#555"/><text x="304.5" y="9" font-size="9.6" letter-spacing="-0.35" text-anchor="middle" fill="#222" font-family="Liberation Sans">26</text><rect x="314" y="20" width="1" height="3" fill="#555"/><rect x="324" y="16" width="1" height="7" fill="#555"/><text x="324.5" y="9" font-size="9.6" letter-spacing="-0.35" text-anchor="middle" fill="#222" font-family="Liberation Sans">28</text><rect x="334" y="20" width="1" height="3" fill="#555"/><rect x="344" y="16" width="1" height="7" fill="#555"/><text x="344.5" y="9" font-size="9.6" letter-spacing="-0.35" text-anchor="middle" fill="#222" font-family="Liberation Sans">30</text><rect x="354" y="20" width="1" height="3" fill="#555"/><rect x="364" y="16" width="1" height="7" fill="#555"/><text x="364.5" y="9" font-size="9.6" letter-spacing="-0.35" text-anchor="middle" fill="#222" font-family="Liberation Sans">32</text><rect x="374" y="20" width="1" height="3" fill="#555"/><rect x="384" y="16" width="1" height="7" fill="#555"/><text x="384.5" y="9" font-size="9.6" letter-spacing="-0.35" text-anchor="middle" fill="#222" font-family="Liberation Sans">34</text><rect x="394" y="20" width="1" height="3" fill="#555"/><rect x="404" y="16" width="1" height="7" fill="#555"/><text x="404.5" y="9" font-size="9.6" letter-spacing="-0.35" text-anchor="middle" fill="#222" font-family="Liberation Sans">36</text><rect x="414" y="20" width="1" height="3" fill="#555"/><rect x="424" y="16" width="1" height="7" fill="#555"/><text x="424.5" y="9" font-size="9.6" letter-spacing="-0.35" text-anchor="middle" fill="#222" font-family="Liberation Sans">38</text><rect x="434" y="20" width="1" height="3" fill="#555"/><rect x="444" y="16" width="1" height="7" fill="#555"/><text x="444.5" y="9" font-size="9.6" letter-spacing="-0.35" text-anchor="middle" fill="#222" font-family="Liberation Sans">40</text><rect x="454" y="20" width="1" height="3" fill="#555"/><rect x="464" y="16" width="1" height="7" fill="#555"/><text x="464.5" y="9" font-size="9.6" letter-spacing="-0.35" text-anchor="middle" fill="#222" font-family="Liberation Sans">42</text><rect x="474" y="20" width="1" height="3" fill="#555"/><rect x="484" y="16" width="1" height="7" fill="#555"/><text x="484.5" y="9" font-size="9.6" letter-spacing="-0.35" text-anchor="middle" fill="#222" font-family="Liberation Sans">44</text><rect x="494" y="20" width="1" height="3" fill="#555"/><rect x="504" y="16" width="1" height="7" fill="#555"/><text x="504.5" y="9" font-size="9.6" letter-spacing="-0.35" text-anchor="middle" fill="#222" font-family="Liberation Sans">46</text><rect x="514" y="20" width="1" height="3" fill="#555"/><rect x="524" y="16" width="1" height="7" fill="#555"/><text x="524.5" y="9" font-size="9.6" letter-spacing="-0.35" text-anchor="middle" fill="#222" font-family="Liberation Sans">48</text><rect x="534" y="20" width="1" height="3" fill="#555"/><rect x="544" y="16" width="1" height="7" fill="#555"/><text x="544.5" y="9" font-size="9.6" letter-spacing="-0.35" text-anchor="middle" fill="#222" font-family="Liberation Sans">50</text><rect x="554" y="20" width="1" height="3" fill="#555"/><rect x="564" y="16" width="1" height="7" fill="#555"/><text x="564.5" y="9" font-size="9.6" letter-spacing="-0.35" text-anchor="middle" fill="#222" font-family="Liberation Sans">52</text><rect x="574" y="20" width="1" height="3" fill="#555"/><rect x="584" y="16" width="1" height="7" fill="#555"/><text x="584.5" y="9" font-size="9.6" letter-spacing="-0.35" text-anchor="middle" fill="#222" font-family="Liberation Sans">54</text><rect x="594" y="20" width="1" height="3" fill="#555"/><rect x="604" y="16" width="1" height="7" fill="#555"/><text x="604.5" y="9" font-size="9.6" letter-spacing="-0.35" text-anchor="middle" fill="#222" font-family="Liberation Sans">56</text><rect x="614" y="20" width="1" height="3" fill="#555"/><rect x="624" y="16" width="1" height="7" fill="#555"/><text x="624.5" y="9" font-size="9.6" letter-spacing="-0.35" text-anchor="middle" fill="#222" font-family="Liberation Sans">58</text><rect x="634" y="20" width="1" height="3" fill="#555"/><rect x="644" y="16" width="1" height="7" fill="#555"/><text x="644.5" y="9" font-size="9.6" letter-spacing="-0.35" text-anchor="middle" fill="#222" font-family="Liberation Sans">60</text><rect x="654" y="20" width="1" height="3" fill="#555"/><rect x="664" y="16" width="1" height="7" fill="#555"/><text x="664.5" y="9" font-size="9.6" letter-spacing="-0.35" text-anchor="middle" fill="#222" font-family="Liberation Sans">62</text><rect x="674" y="20" width="1" height="3" fill="#555"/><rect x="684" y="16" width="1" height="7" fill="#555"/><text x="684.5" y="9" font-size="9.6" letter-spacing="-0.35" text-anchor="middle" fill="#222" font-family="Liberation Sans">64</text><rect x="694" y="20" width="1" height="3" fill="#555"/><rect x="704" y="16" width="1" height="7" fill="#555"/><text x="704.5" y="9" font-size="9.6" letter-spacing="-0.35" text-anchor="middle" fill="#222" font-family="Liberation Sans">66</text><rect x="714" y="20" width="1" height="3" fill="#555"/><rect x="724" y="16" width="1" height="7" fill="#555"/><text x="724.5" y="9" font-size="9.6" letter-spacing="-0.35" text-anchor="middle" fill="#222" font-family="Liberation Sans">68</text><rect x="734" y="20" width="1" height="3" fill="#555"/><rect x="744" y="16" width="1" height="7" fill="#555"/><text x="744.5" y="9" font-size="9.6" letter-spacing="-0.35" text-anchor="middle" fill="#222" font-family="Liberation Sans">70</text><rect x="754" y="20" width="1" height="3" fill="#555"/><rect x="764" y="16" width="1" height="7" fill="#555"/><text x="764.5" y="9" font-size="9.6" letter-spacing="-0.35" text-anchor="middle" fill="#222" font-family="Liberation Sans">72</text><rect x="774" y="20" width="1" height="3" fill="#555"/><rect x="784" y="16" width="1" height="7" fill="#555"/><text x="784.5" y="9" font-size="9.6" letter-spacing="-0.35" text-anchor="middle" fill="#222" font-family="Liberation Sans">74</text><rect x="794" y="20" width="1" height="3" fill="#555"/><rect x="804" y="16" width="1" height="7" fill="#555"/><text x="804.5" y="9" font-size="9.6" letter-spacing="-0.35" text-anchor="middle" fill="#222" font-family="Liberation Sans">76</text><rect x="814" y="20" width="1" height="3" fill="#555"/><rect x="824" y="16" width="1" height="7" fill="#555"/><text x="824.5" y="9" font-size="9.6" letter-spacing="-0.35" text-anchor="middle" fill="#222" font-family="Liberation Sans">78</text><rect x="834" y="20" width="1" height="3" fill="#555"/><rect x="844" y="16" width="1" height="7" fill="#555"/><text x="844.5" y="9" font-size="9.6" letter-spacing="-0.35" text-anchor="middle" fill="#222" font-family="Liberation Sans">80</text><rect x="854" y="20" width="1" height="3" fill="#555"/><rect x="864" y="16" width="1" height="7" fill="#555"/><text x="864.5" y="9" font-size="9.6" letter-spacing="-0.35" text-anchor="middle" fill="#222" font-family="Liberation Sans">82</text><rect x="874" y="20" width="1" height="3" fill="#555"/><rect x="884" y="16" width="1" height="7" fill="#555"/><text x="884.5" y="9" font-size="9.6" letter-spacing="-0.35" text-anchor="middle" fill="#222" font-family="Liberation Sans">84</text><rect x="894" y="20" width="1" height="3" fill="#555"/><rect x="904" y="16" width="1" height="7" fill="#555"/><text x="904.5" y="9" font-size="9.6" letter-spacing="-0.35" text-anchor="middle" fill="#222" font-family="Liberation Sans">86</text><rect x="914" y="20" width="1" height="3" fill="#555"/><rect x="924" y="16" width="1" height="7" fill="#555"/><text x="924.5" y="9" font-size="9.6" letter-spacing="-0.35" text-anchor="middle" fill="#222" font-family="Liberation Sans">88</text><rect x="934" y="20" width="1" height="3" fill="#555"/><rect x="944" y="16" width="1" height="7" fill="#555"/><text x="944.5" y="9" font-size="9.6" letter-spacing="-0.35" text-anchor="middle" fill="#222" font-family="Liberation Sans">90</text><rect x="954" y="20" width="1" height="3" fill="#555"/><rect x="964" y="16" width="1" height="7" fill="#555"/><text x="964.5" y="9" font-size="9.6" letter-spacing="-0.35" text-anchor="middle" fill="#222" font-family="Liberation Sans">92</text><rect x="974" y="20" width="1" height="3" fill="#555"/><rect x="984" y="16" width="1" height="7" fill="#555"/><text x="984.5" y="9" font-size="9.6" letter-spacing="-0.35" text-anchor="middle" fill="#222" font-family="Liberation Sans">94</text><rect x="994" y="20" width="1" height="3" fill="#555"/><rect x="1004" y="16" width="1" height="7" fill="#555"/><text x="1004.5" y="9" font-size="9.6" letter-spacing="-0.35" text-anchor="middle" fill="#222" font-family="Liberation Sans">96</text><rect x="1014" y="20" width="1" height="3" fill="#555"/><rect x="1024" y="16" width="1" height="7" fill="#555"/><text x="1024.5" y="9" font-size="9.6" letter-spacing="-0.35" text-anchor="middle" fill="#222" font-family="Liberation Sans">98</text><rect x="1034" y="20" width="1" height="3" fill="#555"/><rect x="1044" y="16" width="1" height="7" fill="#555"/><text x="1044.5" y="9" font-size="9.6" letter-spacing="-0.35" text-anchor="middle" fill="#222" font-family="Liberation Sans">100</text><rect x="1054" y="20" width="1" height="3" fill="#555"/><rect x="1064" y="16" width="1" height="7" fill="#555"/><text x="1064.5" y="9" font-size="9.6" letter-spacing="-0.35" text-anchor="middle" fill="#222" font-family="Liberation Sans">102</text></g><path d="M299.0,13 L310.0,13 L304.5,19.5 Z" fill="#000"/></svg><svg class="a" style="left:72px;top:155px" width="23" height="577" viewBox="0 0 23 577"><rect width="23" height="577" fill="#ececec"/><rect x="16" y="578" width="7" height="1" fill="#555"/><g transform="translate(9,578.5) rotate(-90)"><text x="0" y="0" font-size="9.6" letter-spacing="-0.35" text-anchor="middle" fill="#222" font-family="Liberation Sans">-20</text></g><rect x="20" y="568" width="3" height="1" fill="#555"/><rect x="16" y="558" width="7" height="1" fill="#555"/><g transform="translate(9,558.5) rotate(-90)"><text x="0" y="0" font-size="9.6" letter-spacing="-0.35" text-anchor="middle" fill="#222" font-family="Liberation Sans">-18</text></g><rect x="20" y="548" width="3" height="1" fill="#555"/><rect x="16" y="538" width="7" height="1" fill="#555"/><g transform="translate(9,538.5) rotate(-90)"><text x="0" y="0" font-size="9.6" letter-spacing="-0.35" text-anchor="middle" fill="#222" font-family="Liberation Sans">-16</text></g><rect x="20" y="528" width="3" height="1" fill="#555"/><rect x="16" y="518" width="7" height="1" fill="#555"/><g transform="translate(9,518.5) rotate(-90)"><text x="0" y="0" font-size="9.6" letter-spacing="-0.35" text-anchor="middle" fill="#222" font-family="Liberation Sans">-14</text></g><rect x="20" y="508" width="3" height="1" fill="#555"/><rect x="16" y="498" width="7" height="1" fill="#555"/><g transform="translate(9,498.5) rotate(-90)"><text x="0" y="0" font-size="9.6" letter-spacing="-0.35" text-anchor="middle" fill="#222" font-family="Liberation Sans">-12</text></g><rect x="20" y="488" width="3" height="1" fill="#555"/><rect x="16" y="478" width="7" height="1" fill="#555"/><g transform="translate(9,478.5) rotate(-90)"><text x="0" y="0" font-size="9.6" letter-spacing="-0.35" text-anchor="middle" fill="#222" font-family="Liberation Sans">-10</text></g><rect x="20" y="468" width="3" height="1" fill="#555"/><rect x="16" y="458" width="7" height="1" fill="#555"/><g transform="translate(9,458.5) rotate(-90)"><text x="0" y="0" font-size="9.6" letter-spacing="-0.35" text-anchor="middle" fill="#222" font-family="Liberation Sans">-8</text></g><rect x="20" y="448" width="3" height="1" fill="#555"/><rect x="16" y="438" width="7" height="1" fill="#555"/><g transform="translate(9,438.5) rotate(-90)"><text x="0" y="0" font-size="9.6" letter-spacing="-0.35" text-anchor="middle" fill="#222" font-family="Liberation Sans">-6</text></g><rect x="20" y="428" width="3" height="1" fill="#555"/><rect x="16" y="418" width="7" height="1" fill="#555"/><g transform="translate(9,418.5) rotate(-90)"><text x="0" y="0" font-size="9.6" letter-spacing="-0.35" text-anchor="middle" fill="#222" font-family="Liberation Sans">-4</text></g><rect x="20" y="408" width="3" height="1" fill="#555"/><rect x="16" y="398" width="7" height="1" fill="#555"/><g transform="translate(9,398.5) rotate(-90)"><text x="0" y="0" font-size="9.6" letter-spacing="-0.35" text-anchor="middle" fill="#222" font-family="Liberation Sans">-2</text></g><rect x="20" y="388" width="3" height="1" fill="#555"/><rect x="16" y="378" width="7" height="1" fill="#555"/><g transform="translate(9,378.5) rotate(-90)"><text x="0" y="0" font-size="9.6" letter-spacing="-0.35" text-anchor="middle" fill="#222" font-family="Liberation Sans">0</text></g><rect x="20" y="368" width="3" height="1" fill="#555"/><rect x="16" y="358" width="7" height="1" fill="#555"/><g transform="translate(9,358.5) rotate(-90)"><text x="0" y="0" font-size="9.6" letter-spacing="-0.35" text-anchor="middle" fill="#222" font-family="Liberation Sans">2</text></g><rect x="20" y="348" width="3" height="1" fill="#555"/><rect x="16" y="338" width="7" height="1" fill="#555"/><g transform="translate(9,338.5) rotate(-90)"><text x="0" y="0" font-size="9.6" letter-spacing="-0.35" text-anchor="middle" fill="#222" font-family="Liberation Sans">4</text></g><rect x="20" y="328" width="3" height="1" fill="#555"/><rect x="16" y="318" width="7" height="1" fill="#555"/><g transform="translate(9,318.5) rotate(-90)"><text x="0" y="0" font-size="9.6" letter-spacing="-0.35" text-anchor="middle" fill="#222" font-family="Liberation Sans">6</text></g><rect x="20" y="308" width="3" height="1" fill="#555"/><rect x="16" y="298" width="7" height="1" fill="#555"/><g transform="translate(9,298.5) rotate(-90)"><text x="0" y="0" font-size="9.6" letter-spacing="-0.35" text-anchor="middle" fill="#222" font-family="Liberation Sans">8</text></g><rect x="20" y="288" width="3" height="1" fill="#555"/><rect x="16" y="278" width="7" height="1" fill="#555"/><g transform="translate(9,278.5) rotate(-90)"><text x="0" y="0" font-size="9.6" letter-spacing="-0.35" text-anchor="middle" fill="#222" font-family="Liberation Sans">10</text></g><rect x="20" y="268" width="3" height="1" fill="#555"/><rect x="16" y="258" width="7" height="1" fill="#555"/><g transform="translate(9,258.5) rotate(-90)"><text x="0" y="0" font-size="9.6" letter-spacing="-0.35" text-anchor="middle" fill="#222" font-family="Liberation Sans">12</text></g><rect x="20" y="248" width="3" height="1" fill="#555"/><rect x="16" y="238" width="7" height="1" fill="#555"/><g transform="translate(9,238.5) rotate(-90)"><text x="0" y="0" font-size="9.6" letter-spacing="-0.35" text-anchor="middle" fill="#222" font-family="Liberation Sans">14</text></g><rect x="20" y="228" width="3" height="1" fill="#555"/><rect x="16" y="218" width="7" height="1" fill="#555"/><g transform="translate(9,218.5) rotate(-90)"><text x="0" y="0" font-size="9.6" letter-spacing="-0.35" text-anchor="middle" fill="#222" font-family="Liberation Sans">16</text></g><rect x="20" y="208" width="3" height="1" fill="#555"/><rect x="16" y="198" width="7" height="1" fill="#555"/><g transform="translate(9,198.5) rotate(-90)"><text x="0" y="0" font-size="9.6" letter-spacing="-0.35" text-anchor="middle" fill="#222" font-family="Liberation Sans">18</text></g><rect x="20" y="188" width="3" height="1" fill="#555"/><rect x="16" y="178" width="7" height="1" fill="#555"/><g transform="translate(9,178.5) rotate(-90)"><text x="0" y="0" font-size="9.6" letter-spacing="-0.35" text-anchor="middle" fill="#222" font-family="Liberation Sans">20</text></g><rect x="20" y="168" width="3" height="1" fill="#555"/><rect x="16" y="158" width="7" height="1" fill="#555"/><g transform="translate(9,158.5) rotate(-90)"><text x="0" y="0" font-size="9.6" letter-spacing="-0.35" text-anchor="middle" fill="#222" font-family="Liberation Sans">22</text></g><rect x="20" y="148" width="3" height="1" fill="#555"/><rect x="16" y="138" width="7" height="1" fill="#555"/><g transform="translate(9,138.5) rotate(-90)"><text x="0" y="0" font-size="9.6" letter-spacing="-0.35" text-anchor="middle" fill="#222" font-family="Liberation Sans">24</text></g><rect x="20" y="128" width="3" height="1" fill="#555"/><rect x="16" y="118" width="7" height="1" fill="#555"/><g transform="translate(9,118.5) rotate(-90)"><text x="0" y="0" font-size="9.6" letter-spacing="-0.35" text-anchor="middle" fill="#222" font-family="Liberation Sans">26</text></g><rect x="20" y="108" width="3" height="1" fill="#555"/><rect x="16" y="98" width="7" height="1" fill="#555"/><g transform="translate(9,98.5) rotate(-90)"><text x="0" y="0" font-size="9.6" letter-spacing="-0.35" text-anchor="middle" fill="#222" font-family="Liberation Sans">28</text></g><rect x="20" y="88" width="3" height="1" fill="#555"/><rect x="16" y="78" width="7" height="1" fill="#555"/><g transform="translate(9,78.5) rotate(-90)"><text x="0" y="0" font-size="9.6" letter-spacing="-0.35" text-anchor="middle" fill="#222" font-family="Liberation Sans">30</text></g><rect x="20" y="68" width="3" height="1" fill="#555"/><rect x="16" y="58" width="7" height="1" fill="#555"/><g transform="translate(9,58.5) rotate(-90)"><text x="0" y="0" font-size="9.6" letter-spacing="-0.35" text-anchor="middle" fill="#222" font-family="Liberation Sans">32</text></g><rect x="20" y="48" width="3" height="1" fill="#555"/><rect x="16" y="38" width="7" height="1" fill="#555"/><g transform="translate(9,38.5) rotate(-90)"><text x="0" y="0" font-size="9.6" letter-spacing="-0.35" text-anchor="middle" fill="#222" font-family="Liberation Sans">34</text></g><rect x="20" y="28" width="3" height="1" fill="#555"/><rect x="16" y="18" width="7" height="1" fill="#555"/><g transform="translate(9,18.5) rotate(-90)"><text x="0" y="0" font-size="9.6" letter-spacing="-0.35" text-anchor="middle" fill="#222" font-family="Liberation Sans">36</text></g><rect x="20" y="8" width="3" height="1" fill="#555"/><rect x="16" y="-2" width="7" height="1" fill="#555"/><g transform="translate(9,-1.5) rotate(-90)"><text x="0" y="0" font-size="9.6" letter-spacing="-0.35" text-anchor="middle" fill="#222" font-family="Liberation Sans">38</text></g><path d="M13,0 L17.5,0 L13,4.5 Z" fill="#000"/></svg>
<svg class="a" style="left:95px;top:155px" width="1043" height="577" viewBox="0 0 1043 577"><defs><pattern id="gd" x="1" y="8" width="10" height="10" patternUnits="userSpaceOnUse"><rect x="0" y="0" width="1" height="1" fill="#404040"/></pattern></defs><rect width="1043" height="577" fill="#000"/><rect width="1043" height="577" fill="url(#gd)"/><rect x="21" y="0" width="1" height="577" fill="#242424"/><rect x="121" y="0" width="1" height="577" fill="#242424"/><rect x="221" y="0" width="1" height="577" fill="#242424"/><rect x="321" y="0" width="1" height="577" fill="#242424"/><rect x="421" y="0" width="1" height="577" fill="#242424"/><rect x="521" y="0" width="1" height="577" fill="#242424"/><rect x="621" y="0" width="1" height="577" fill="#242424"/><rect x="721" y="0" width="1" height="577" fill="#242424"/><rect x="821" y="0" width="1" height="577" fill="#242424"/><rect x="921" y="0" width="1" height="577" fill="#242424"/><rect x="1021" y="0" width="1" height="577" fill="#242424"/><rect x="0" y="-22" width="1043" height="1" fill="#242424"/><rect x="0" y="78" width="1043" height="1" fill="#242424"/><rect x="0" y="178" width="1043" height="1" fill="#242424"/><rect x="0" y="278" width="1043" height="1" fill="#242424"/><rect x="0" y="378" width="1043" height="1" fill="#242424"/><rect x="0" y="478" width="1043" height="1" fill="#242424"/><rect width="1043" height="577" fill="url(#gd)"/><rect x="21" y="358" width="1" height="41" fill="#a00000"/><rect x="0" y="378" width="41" height="1" fill="#a00000"/><line x1="101" y1="288.5" x2="941" y2="288.5" stroke="#ff0000" stroke-width="1.5" stroke-dasharray="17 7 2 7" stroke-dashoffset="1"/><line x1="221.5" y1="178" x2="221.5" y2="398" stroke="#ff0000" stroke-width="1.5" stroke-dasharray="17 7 2 7" stroke-dashoffset="14"/><line x1="821.5" y1="178" x2="821.5" y2="398" stroke="#ff0000" stroke-width="1.5" stroke-dasharray="17 7 2 7" stroke-dashoffset="14"/><rect x="121.4" y="198.60000000000002" width="800" height="180" fill="none" stroke="#fff" stroke-width="2.6"/><circle cx="221.5" cy="288.5" r="40" fill="none" stroke="#fff" stroke-width="2.6"/><circle cx="821.5" cy="288.5" r="40" fill="none" stroke="#fff" stroke-width="2.6"/><g transform="translate(293,89.5) rotate(-90)"><text x="0" y="0" font-family="Liberation Sans" font-size="29" fill="#fff" stroke="#000" stroke-width="0.35" letter-spacing="0.7" style="-webkit-text-stroke:0">104.24</text></g><rect x="271.5" y="0" width="21" height="87.5" fill="none" stroke="#4a6aa8" stroke-width="1" stroke-dasharray="3 3"/><text x="289" y="16" font-family="Liberation Sans" font-size="13.5" fill="#ebb21e" style="-webkit-text-stroke:0.2px #ebb21e">Grille</text></svg>
<div class="a" style="left:1138px;top:155px;width:16px;height:577px;background:#f7f7f7"></div><div class="a" style="left:1142px;top:283px;width:9px;height:322px;background:#7d7d7d;border-radius:5px"></div><div class="a" style="left:72px;top:732px;width:23px;height:16px;background:#ececec"></div><div class="a" style="left:95px;top:732px;width:1004px;height:16px;background:#f7f7f7"></div><div class="a" style="left:281px;top:737px;width:633px;height:8px;background:#7d7d7d;border-radius:5px"></div><div id="zoomlbl" class="a">1 &lt; 10</div>
<div class="a" style="left:72px;top:748px;width:1083px;height:2px;background:#c2c2c2"></div><div class="a" style="left:72px;top:750px;width:1082px;height:20px;background:#fff"></div><div class="a" style="left:72px;top:770px;width:1082px;height:1px;background:#b8b8b8"></div><div class="a" style="left:72px;top:771px;width:1082px;height:27px;background:#ececec"></div><div class="a" style="left:77px;top:751px;font-size:13px;color:#1a1acc;white-space:nowrap;letter-spacing:0.15px"><i>Commande:</i> paste</div><div class="a" style="left:73px;top:778px;font-size:13px;color:#222">Position :</div><div class="a" style="left:132px;top:776px;width:995px;height:18px;background:#fff"></div><div class="a" style="left:1127px;top:772px;width:26px;height:26px;border:1px solid #c4c4c4;background:#f2f2f2"></div><svg class="a" style="left:1131px;top:777px" width="18" height="15" viewBox="0 0 18 15"><rect x="0.5" y="0.5" width="16" height="13" fill="#fff" stroke="#333" stroke-width="1"/><rect x="0.5" y="0.5" width="16" height="3" fill="#222"/></svg><div class="a" style="left:1154px;top:108px;width:2px;height:690px;background:#bcbcbc"></div>
<div class="a" style="left:1156px;top:108px;width:299px;height:690px;background:#fff"></div><div class="a" style="left:1156px;top:108px;width:299px;height:22px;background:linear-gradient(#ececec,#e6e6e6 60%,#d8d8d8);border-bottom:1px solid #c2c2c2;font-size:12px;color:#333;text-align:center;line-height:23px;padding-left:34px">Liste des calques</div><svg class="a" style="left:1156px;top:111px" width="35" height="15" viewBox="0 0 35 15"><circle cx="8" cy="7.5" r="7" fill="#6c6c6c"/><path d="M5,4.5 L11,10.5 M11,4.5 L5,10.5" stroke="#fff" stroke-width="1.8"/><circle cx="26" cy="7.5" r="7" fill="#6c6c6c"/><rect x="24" y="3.5" width="6" height="5" fill="none" stroke="#fff" stroke-width="1.1"/><rect x="21.5" y="6" width="6" height="5" fill="#6c6c6c" stroke="#fff" stroke-width="1.1"/></svg><div class="a" style="left:1156px;top:130px;width:299px;height:27px;background:#bdbdbd"></div><div class="a" style="left:1156px;top:131px;width:58px;height:24px;background:linear-gradient(#f2f2f2,#f7f7f7 50%,#eeeeee)"></div><div class="a" style="left:1216px;top:131px;width:58px;height:24px;background:linear-gradient(#f2f2f2,#f7f7f7 50%,#eeeeee)"></div><div class="a" style="left:1276px;top:131px;width:58px;height:24px;background:linear-gradient(#f2f2f2,#f7f7f7 50%,#eeeeee)"></div><div class="a" style="left:1336px;top:131px;width:58px;height:24px;background:linear-gradient(#f2f2f2,#f7f7f7 50%,#eeeeee)"></div><div class="a" style="left:1396px;top:131px;width:58px;height:24px;background:linear-gradient(#f2f2f2,#f7f7f7 50%,#eeeeee)"></div><svg class="a" style="left:1176px;top:136px" width="18" height="14" viewBox="0 0 18 14"><g transform="translate(9,7) scale(1.1) translate(-9,-7)"><path d="M1.5,7.5 Q4,1.5 9,1.5 Q14.5,1.5 16.5,7 Q14,12.5 9,12.5 Q4,12.5 1.5,7.5 Z" fill="#000"/><path d="M3.5,7.5 Q6,3.8 9,3.8 Q12,3.8 14.5,7.2 Q12,10 9,10 Q6,10 3.5,7.5 Z" fill="#fff"/><circle cx="9" cy="7.2" r="2.8" fill="#000"/><path d="M3,5 L1.5,4 M15,5 L16.5,4.2" stroke="#000" stroke-width="1"/></g></svg><svg class="a" style="left:1236px;top:136px" width="18" height="14" viewBox="0 0 18 14"><g transform="translate(9,7) scale(1.1) translate(-9,-7)"><path d="M1.5,7.5 Q4,1.5 9,1.5 Q14.5,1.5 16.5,7 Q14,12.5 9,12.5 Q4,12.5 1.5,7.5 Z" fill="#999"/><path d="M3.5,7.5 Q6,3.8 9,3.8 Q12,3.8 14.5,7.2 Q12,10 9,10 Q6,10 3.5,7.5 Z" fill="#fff"/><circle cx="9" cy="7.2" r="2.8" fill="#999"/><path d="M3,5 L1.5,4 M15,5 L16.5,4.2" stroke="#999" stroke-width="1"/></g></svg><svg class="a" style="left:1297px;top:135px" width="16" height="16" viewBox="0 0 16 16"><path d="M8,1.5 L8,14.5 M1.5,8 L14.5,8" stroke="#e00000" stroke-width="3"/></svg><svg class="a" style="left:1357px;top:135px" width="16" height="16" viewBox="0 0 16 16"><path d="M2,8 L14,8" stroke="#e00000" stroke-width="3"/></svg><svg class="a" style="left:1417px;top:134px" width="16" height="16" viewBox="0 0 16 16"><path d="M1.5,14.5 L3,10 L12.5,1 Q13.5,0.3 14.5,1.3 Q15.5,2.5 14.7,3.3 L5,13 Z" fill="#f0b040" stroke="#a06010" stroke-width="0.6"/><path d="M12.5,1 L14.7,3.3 Q15.5,2.5 14.5,1.3 Z" fill="#e03030"/><path d="M1.5,14.5 L3,10 L5,13 Z" fill="#333"/></svg><div class="a" style="left:1161px;top:163px;width:16px;height:9px;background:#fff;border:1px solid #000"></div><div class="a" style="left:1183px;top:159px;font-size:13px;color:#111;white-space:nowrap">0</div><svg class="a" style="left:1413px;top:160px" width="18" height="14" viewBox="0 0 18 14"><g transform="translate(9,7) scale(1.0) translate(-9,-7)"><path d="M1.5,7.5 Q4,1.5 9,1.5 Q14.5,1.5 16.5,7 Q14,12.5 9,12.5 Q4,12.5 1.5,7.5 Z" fill="#000"/><path d="M3.5,7.5 Q6,3.8 9,3.8 Q12,3.8 14.5,7.2 Q12,10 9,10 Q6,10 3.5,7.5 Z" fill="#fff"/><circle cx="9" cy="7.2" r="2.8" fill="#000"/><path d="M3,5 L1.5,4 M15,5 L16.5,4.2" stroke="#000" stroke-width="1"/></g></svg><svg class="a" style="left:1439px;top:159px" width="12" height="16" viewBox="0 0 12 16"><path d="M3,8 L3,5 Q3,1.5 6,1.5 Q9,1.5 9,5 L9,8" stroke="#bdbdbd" stroke-width="1.6" fill="none"/><rect x="1.5" y="7.5" width="9" height="7.5" rx="1" fill="#bdbdbd"/></svg><div class="a" style="left:1161px;top:183px;width:16px;height:9px;background:#ff0000;border:1px solid #000"></div><div class="a" style="left:1183px;top:179px;font-size:13px;color:#111;white-space:nowrap">Center</div><svg class="a" style="left:1413px;top:180px" width="18" height="14" viewBox="0 0 18 14"><g transform="translate(9,7) scale(1.0) translate(-9,-7)"><path d="M1.5,7.5 Q4,1.5 9,1.5 Q14.5,1.5 16.5,7 Q14,12.5 9,12.5 Q4,12.5 1.5,7.5 Z" fill="#000"/><path d="M3.5,7.5 Q6,3.8 9,3.8 Q12,3.8 14.5,7.2 Q12,10 9,10 Q6,10 3.5,7.5 Z" fill="#fff"/><circle cx="9" cy="7.2" r="2.8" fill="#000"/><path d="M3,5 L1.5,4 M15,5 L16.5,4.2" stroke="#000" stroke-width="1"/></g></svg><svg class="a" style="left:1439px;top:179px" width="12" height="16" viewBox="0 0 12 16"><path d="M3,8 L3,5 Q3,1.5 6,1.5 Q9,1.5 9,5 L9,8" stroke="#bdbdbd" stroke-width="1.6" fill="none"/><rect x="1.5" y="7.5" width="9" height="7.5" rx="1" fill="#bdbdbd"/></svg><div class="a" style="left:1161px;top:203px;width:16px;height:9px;background:#000;border:1px solid #000"></div><div class="a" style="left:1183px;top:199px;font-size:13px;color:#111;white-space:nowrap">Hidden</div><svg class="a" style="left:1413px;top:200px" width="18" height="14" viewBox="0 0 18 14"><g transform="translate(9,7) scale(1.0) translate(-9,-7)"><path d="M1.5,7.5 Q4,1.5 9,1.5 Q14.5,1.5 16.5,7 Q14,12.5 9,12.5 Q4,12.5 1.5,7.5 Z" fill="#000"/><path d="M3.5,7.5 Q6,3.8 9,3.8 Q12,3.8 14.5,7.2 Q12,10 9,10 Q6,10 3.5,7.5 Z" fill="#fff"/><circle cx="9" cy="7.2" r="2.8" fill="#000"/><path d="M3,5 L1.5,4 M15,5 L16.5,4.2" stroke="#000" stroke-width="1"/></g></svg><svg class="a" style="left:1439px;top:199px" width="12" height="16" viewBox="0 0 12 16"><path d="M3,8 L3,5 Q3,1.5 6,1.5 Q9,1.5 9,5 L9,8" stroke="#bdbdbd" stroke-width="1.6" fill="none"/><rect x="1.5" y="7.5" width="9" height="7.5" rx="1" fill="#bdbdbd"/></svg><div class="a" style="left:1161px;top:223px;width:16px;height:9px;background:#fff;border:1px solid #000"></div><div class="a" style="left:1183px;top:219px;font-size:13px;color:#111;white-space:nowrap">Visible</div><svg class="a" style="left:1413px;top:220px" width="18" height="14" viewBox="0 0 18 14"><g transform="translate(9,7) scale(1.0) translate(-9,-7)"><path d="M1.5,7.5 Q4,1.5 9,1.5 Q14.5,1.5 16.5,7 Q14,12.5 9,12.5 Q4,12.5 1.5,7.5 Z" fill="#000"/><path d="M3.5,7.5 Q6,3.8 9,3.8 Q12,3.8 14.5,7.2 Q12,10 9,10 Q6,10 3.5,7.5 Z" fill="#fff"/><circle cx="9" cy="7.2" r="2.8" fill="#000"/><path d="M3,5 L1.5,4 M15,5 L16.5,4.2" stroke="#000" stroke-width="1"/></g></svg><svg class="a" style="left:1439px;top:219px" width="12" height="16" viewBox="0 0 12 16"><path d="M3,8 L3,5 Q3,1.5 6,1.5 Q9,1.5 9,5 L9,8" stroke="#bdbdbd" stroke-width="1.6" fill="none"/><rect x="1.5" y="7.5" width="9" height="7.5" rx="1" fill="#bdbdbd"/></svg><svg class="a" style="left:1393px;top:219px" width="16" height="16" viewBox="0 0 16 16"><path d="M1.5,14.5 L3,10 L12.5,1 Q13.5,0.3 14.5,1.3 Q15.5,2.5 14.7,3.3 L5,13 Z" fill="#f0b040" stroke="#a06010" stroke-width="0.6"/><path d="M12.5,1 L14.7,3.3 Q15.5,2.5 14.5,1.3 Z" fill="#e03030"/><path d="M1.5,14.5 L3,10 L5,13 Z" fill="#333"/></svg>
<div class="a" style="left:1455px;top:108px;width:45px;height:690px;background:linear-gradient(90deg,#dcdcdc,#e6e6e6 15%,#e2e2e2 70%,#d0d0d0 92%,#b8b8b8)"></div><div class="a" style="left:1462px;top:116px;width:28px;height:2px;background:repeating-linear-gradient(90deg,#a8a8a8 0 2px,transparent 2px 6px)"></div><div class="a" style="left:1456px;top:120px;width:43px;height:43px;background:#b5b5b5;border-radius:5px"></div><svg class="a" style="left:1463px;top:127px" width="28" height="28" viewBox="0 0 28 28"><rect x="0.5" y="0.5" width="27" height="27" fill="#fff" stroke="#333" stroke-width="1"/><rect x="0.5" y="0.5" width="27" height="4.5" fill="#000"/><rect x="1.5" y="1.2" width="3" height="3" fill="#fff"/><path d="M8,11 L16,9 L16,22 L8,24 Z" fill="#999" stroke="#444" stroke-width="0.5"/><path d="M11,10 L20,8 L20,21 L11,23 Z" fill="#eee" stroke="#444" stroke-width="0.5"/><path d="M14,10 L23,8 L23,21 L14,23 Z" fill="#fff" stroke="#444" stroke-width="0.5"/><path d="M16,20 L20,12 L20,20 Z" fill="none" stroke="#e04040" stroke-width="0.8"/></svg><svg class="a" style="left:1463px;top:174px" width="28" height="28" viewBox="0 0 28 28"><rect x="0.5" y="0.5" width="27" height="27" fill="#fff" stroke="#333" stroke-width="1"/><rect x="0.5" y="0.5" width="27" height="4.5" fill="#000"/><rect x="1.5" y="1.2" width="3" height="3" fill="#fff"/><rect x="7" y="10" width="10" height="8" fill="#f4e6b0" stroke="#666" stroke-width="0.6"/><circle cx="17" cy="18" r="5" fill="#f4e6b0" stroke="#666" stroke-width="0.6"/></svg><svg class="a" style="left:1463px;top:220px" width="28" height="28" viewBox="0 0 28 28"><rect x="0.5" y="0.5" width="27" height="27" fill="#fff" stroke="#333" stroke-width="1"/><rect x="0.5" y="0.5" width="27" height="4.5" fill="#000"/><rect x="1.5" y="1.2" width="3" height="3" fill="#fff"/><rect x="5" y="10" width="19" height="12" rx="2" fill="#f0f0f0" stroke="#a8c0e0" stroke-width="0.8"/></svg><div class="a" style="left:1457px;top:261px;width:41px;height:1px;background:repeating-linear-gradient(90deg,#888 0 1px,transparent 1px 3px)"></div><svg class="a" style="left:1463px;top:276px" width="28" height="28" viewBox="0 0 28 28"><rect x="0.5" y="0.5" width="27" height="27" fill="#fff" stroke="#333" stroke-width="1"/><rect x="0.5" y="0.5" width="27" height="4.5" fill="#000"/><rect x="1.5" y="1.2" width="3" height="3" fill="#fff"/><rect x="4" y="8.0" width="3" height="3" fill="#000"/><rect x="9" y="8.0" width="15" height="3" fill="#fff" stroke="#333" stroke-width="0.6"/><rect x="4" y="13.3" width="3" height="3" fill="#000"/><rect x="9" y="13.3" width="15" height="3" fill="#fff" stroke="#333" stroke-width="0.6"/><rect x="4" y="18.6" width="3" height="3" fill="#000"/><rect x="9" y="18.6" width="15" height="3" fill="#fff" stroke="#333" stroke-width="0.6"/><rect x="4" y="23.9" width="3" height="3" fill="#000"/><rect x="9" y="23.9" width="15" height="3" fill="#fff" stroke="#333" stroke-width="0.6"/></svg><svg class="a" style="left:1463px;top:322px" width="28" height="28" viewBox="0 0 28 28"><rect x="0.5" y="0.5" width="27" height="27" fill="#fff" stroke="#333" stroke-width="1"/><rect x="0.5" y="0.5" width="27" height="4.5" fill="#000"/><rect x="1.5" y="1.2" width="3" height="3" fill="#fff"/><path d="M5,10 L24,10 L17,17 L17,25 L13,23 L13,17 Z" fill="#aaa" stroke="#333" stroke-width="0.7"/></svg><svg class="a" style="left:1463px;top:368px" width="28" height="28" viewBox="0 0 28 28"><rect x="0.5" y="0.5" width="27" height="27" fill="#fff" stroke="#333" stroke-width="1"/><rect x="0.5" y="0.5" width="27" height="4.5" fill="#000"/><rect x="1.5" y="1.2" width="3" height="3" fill="#fff"/><path d="M7,9 L11,11 L11,21 L7,23 Z" fill="#fff" stroke="#333" stroke-width="0.7"/><rect x="11" y="12" width="10" height="8" fill="#777"/><path d="M4,16 L25,16" stroke="#f08080" stroke-width="0.6" stroke-dasharray="1 1"/></svg><div class="a" style="left:1458px;top:409px;width:40px;height:1px;background:repeating-linear-gradient(90deg,#888 0 1px,transparent 1px 3px)"></div><div class="a" style="left:1456px;top:417px;width:43px;height:43px;background:#b5b5b5;border-radius:5px"></div><svg class="a" style="left:1463px;top:424px" width="28" height="28" viewBox="0 0 28 28"><rect x="0.5" y="0.5" width="27" height="27" fill="#fff" stroke="#333" stroke-width="1"/><rect x="0.5" y="0.5" width="27" height="4.5" fill="#000"/><rect x="1.5" y="1.2" width="3" height="3" fill="#fff"/><path d="M3,8 L14,8 M3,11 L13,11 M3,14 L14,14 M3,17 L14,17" stroke="#777" stroke-width="0.6"/><rect x="1" y="22" width="27" height="6" fill="#fff" stroke="#333" stroke-width="0.6"/><path d="M9,25 L25,25" stroke="#555" stroke-width="0.8"/></svg><svg class="a" style="left:1463px;top:471px" width="28" height="28" viewBox="0 0 28 28"><rect x="0.5" y="0.5" width="27" height="27" fill="#fff" stroke="#333" stroke-width="1"/><rect x="0.5" y="0.5" width="27" height="4.5" fill="#000"/><rect x="1.5" y="1.2" width="3" height="3" fill="#fff"/><rect x="8" y="9" width="13" height="16" fill="#c8861e"/><rect x="9.5" y="11" width="10" height="13" fill="#f4f4f4"/><rect x="11" y="8" width="7" height="3" fill="#999"/></svg>
<div id="status" class="a"></div><div class="st" style="left:2px;top:807px">26,38</div><div class="st" style="left:2px;top:827px">-</div><div class="a" style="left:254px;top:802px;width:1px;height:40px;background:#888"></div><div class="st" style="left:256px;top:807px">46.0435&lt;56°</div><div class="st" style="left:256px;top:827px">-</div><div class="a" style="left:506px;top:819px;width:6px;height:6px;border-radius:3px;background:#c4c4c4"></div><div class="st" style="left:662px;top:817px">Position</div><svg class="a" style="left:716px;top:805px" width="20" height="32" viewBox="0 0 20 32"><path d="M10,1 Q18,1 18,10 L18,22 Q18,31 10,31 Q2,31 2,22 L2,10 Q2,1 10,1 Z" fill="#fff" stroke="#333" stroke-width="0.9"/><path d="M2,14 Q10,11 18,14" stroke="#333" stroke-width="0.8" fill="none"/><rect x="8.5" y="5" width="3" height="7" rx="1.5" fill="none" stroke="#333" stroke-width="0.8"/><path d="M10,1 L10,5 M10,12 L10,13" stroke="#333" stroke-width="0.8"/></svg><div class="st" style="left:754px;top:817px">Annuler</div><div class="a" style="left:940px;top:819px;width:6px;height:6px;border-radius:3px;background:#c4c4c4"></div><div class="st" style="left:949px;top:817px">Aucune des entités sélectionnées.</div><div class="a" style="left:1269px;top:819px;width:6px;height:6px;border-radius:3px;background:#c4c4c4"></div>
<svg class="a" style="left:163px;top:47px" width="81" height="81" viewBox="0 0 81 81"><defs><radialGradient id="ring" cx="0.5" cy="0.5" r="0.5"><stop offset="0" stop-color="#ffffff" stop-opacity="0.25"/><stop offset="0.7" stop-color="#ffffff" stop-opacity="0.2"/><stop offset="0.76" stop-color="#9db4cc" stop-opacity="0.35"/><stop offset="0.86" stop-color="#8aa6c4" stop-opacity="0.6"/><stop offset="0.95" stop-color="#9db4cc" stop-opacity="0.45"/><stop offset="1" stop-color="#9db4cc" stop-opacity="0"/></radialGradient></defs><circle cx="40.5" cy="40.8" r="40" fill="url(#ring)"/></svg><svg class="a" style="left:201px;top:85px" width="22" height="32" viewBox="0 0 22 32"><path d="M3,3 L3,26 L8.6,21 L12.6,30.2 L16.8,28.4 L12.8,19.4 L19.8,19.2 Z" fill="#fff" stroke="#000" stroke-width="1.3" stroke-linejoin="round"/></svg></body></html>
